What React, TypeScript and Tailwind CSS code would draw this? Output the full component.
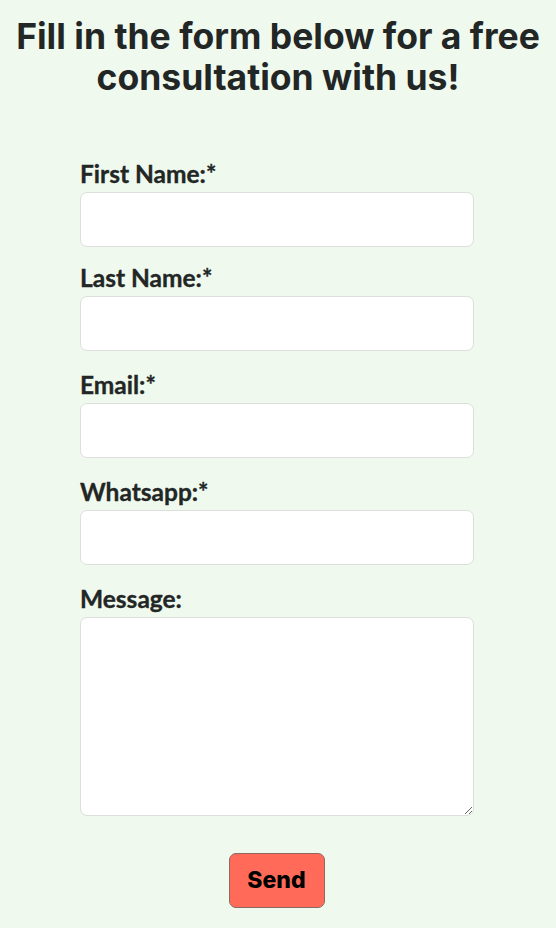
import React from "react";

const fields = [
  { label: "First Name:*", mt: "mt-0" },
  { label: "Last Name:*", mt: "mt-[17px]" },
  { label: "Email:*", mt: "mt-[20px]" },
  { label: "Whatsapp:*", mt: "mt-[20px]" },
];

export default function App() {
  return (
    <div className="min-h-[928px] w-full bg-[#f0f9ee] text-[#222625]">
      <h1
        className="px-2 pt-[16px] text-center text-[35.5px] font-bold leading-[41px] tracking-[0px]"
        style={{ fontFamily: "Inter, 'Open Sans', sans-serif" }}
      >
        Fill in the form below for a free consultation with us!
      </h1>
      <form
        className="ml-[80px] mt-[62px] flex w-[394px] flex-col"
        style={{ fontFamily: "Lato, 'Open Sans', sans-serif" }}
        onSubmit={(e) => e.preventDefault()}
      >
        {fields.map((f) => (
          <div key={f.label} className={f.mt + " flex flex-col"}>
            <label className="mb-[4px] text-[24.5px] font-bold leading-[28px] [-webkit-text-stroke:0.35px_currentColor]">
              {f.label}
            </label>
            <input
              type="text"
              className="h-[55px] w-full rounded-[7px] border border-[#dcdfdc] bg-white px-3 outline-none"
            />
          </div>
        ))}
        <div className="mt-[20px] flex flex-col">
          <label className="mb-[4px] text-[24.5px] font-bold leading-[28px] [-webkit-text-stroke:0.35px_currentColor]">
            Message:
          </label>
          <textarea className="h-[199px] w-full rounded-[7px] border border-[#dcdfdc] bg-white px-3 outline-none" />
        </div>
        <div className="ml-[-1px] mt-[37px] flex justify-center">
          <button
            type="submit"
            className="h-[55px] w-[96px] rounded-[7px] border border-[#8c6a62] bg-[#ff6b58] text-[23px] font-extrabold text-black"
            style={{ fontFamily: "Inter, 'Open Sans', sans-serif" }}
          >
            Send
          </button>
        </div>
      </form>
    </div>
  );
}
